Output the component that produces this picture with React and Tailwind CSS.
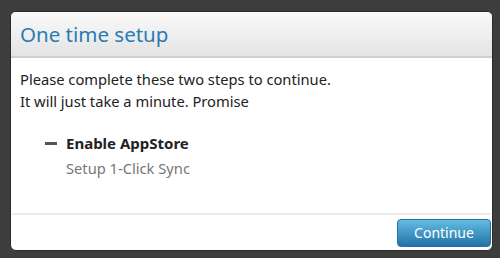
export default function App() {
  return (
    <div className="w-[500px] h-[258px] bg-[#3d3d3d] pt-[11px] pl-[10px] pr-[7px]" style={{ fontFamily: '"Noto Sans", sans-serif' }}>
      <div className="h-[240px] bg-white rounded-[6px] border border-[#2a2a2a] overflow-hidden flex flex-col">
        <div className="h-[46px] bg-gradient-to-b from-[#fafafa] to-[#e4e4e4] border-b-2 border-[#cfcfcf] flex items-center pl-[9px]">
          <span className="text-[20.5px] text-[#2a7bb4] leading-none">One time setup</span>
        </div>
        <div className="flex-1 pl-[9px] pt-[10px]">
          <p className="text-[14.7px] text-[#222] leading-[22px]">Please complete these two steps to continue.</p>
          <p className="text-[14.7px] text-[#222] leading-[22px]">It will just take a minute. Promise</p>
          <div className="mt-[20px] flex items-center pl-[25px]">
            <div className="w-[12px] h-[3px] bg-[#555] mr-[9px]"></div>
            <span className="text-[15px] font-bold text-[#222] leading-[22px]">Enable AppStore</span>
          </div>
          <div className="pl-[46px] text-[14.7px] text-[#777] leading-[22px] mt-[3px]">Setup 1-Click Sync</div>
        </div>
        <div className="mx-[1px] h-[2px] bg-[#ececec]"></div>
        <div className="h-[35px] flex items-start pt-[4px] justify-end pr-[1px]">
          <button className="w-[94px] h-[28px] rounded-[4px] bg-gradient-to-b from-[#62bde3] to-[#2273a6] border border-[#2a6f9c] text-white text-[14px] leading-none">Continue</button>
        </div>
      </div>
    </div>
  );
}
